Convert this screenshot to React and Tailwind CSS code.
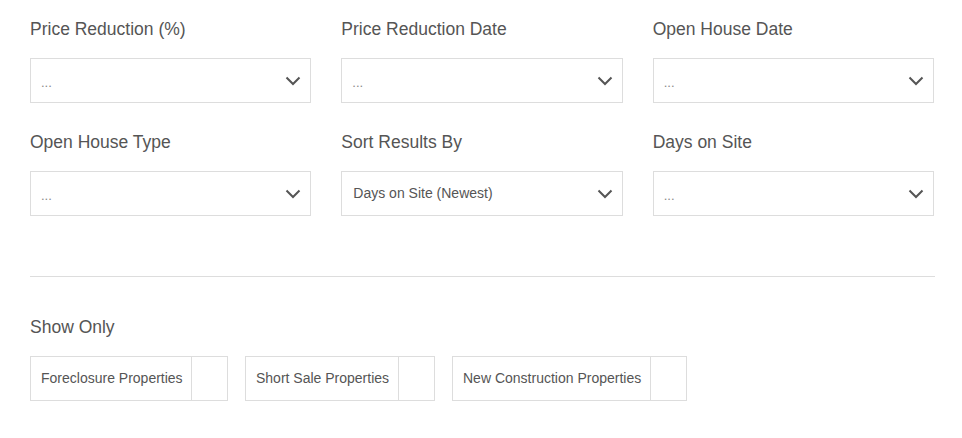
import React from 'react';

const ChevronDown = () => (
  <svg width="16" height="10" viewBox="0 0 16 10" fill="none" className="shrink-0">
    <path d="M1.5 1.5 L8 8 L14.5 1.5" stroke="#555" strokeWidth="2" />
  </svg>
);

const SelectField = ({ label, value }) => (
  <div className="flex flex-col">
    <label className="text-[17.5px] leading-[20px] text-[#555] h-[20px]">{label}</label>
    <div className="mt-[19px] h-[45px] border border-[#ddd] bg-white flex items-center justify-between pl-[10px] pr-[9px]">
      <span className={value === '...' ? 'text-[13px] text-[#888] pt-[4px]' : 'text-[14px] text-[#555] pl-[1px]'}>{value}</span>
      <ChevronDown />
    </div>
  </div>
);

const CheckOption = ({ label, width }) => (
  <div className={`h-[45px] border border-[#ddd] flex items-stretch ${width}`}>
    <span className="flex-1 flex items-center text-[14px] text-[#555] pl-[10px] whitespace-nowrap">{label}</span>
    <span className="w-[36px] border-l border-[#ddd]" />
  </div>
);

export default function App() {
  const fields = [
    { label: 'Price Reduction (%)', value: '...' },
    { label: 'Price Reduction Date', value: '...' },
    { label: 'Open House Date', value: '...' },
    { label: 'Open House Type', value: '...' },
    { label: 'Sort Results By', value: 'Days on Site (Newest)' },
    { label: 'Days on Site', value: '...' },
  ];

  return (
    <div className="w-[962px] h-[438px] bg-white px-[30px] pt-[19px] font-['Liberation_Sans',Arial,sans-serif]">
      <div className="grid grid-cols-3 gap-x-[30px] gap-y-[29px] w-[904px]">
        {fields.map(f => (
          <SelectField key={f.label} label={f.label} value={f.value} />
        ))}
      </div>

      <div className="mt-[60px] border-t border-[#ddd] w-[905px]" />

      <div className="mt-[40px] text-[17.5px] leading-[20px] text-[#555]">Show Only</div>
      <div className="mt-[19px] flex gap-[17px]">
        <CheckOption label="Foreclosure Properties" width="w-[198px]" />
        <CheckOption label="Short Sale Properties" width="w-[190px]" />
        <CheckOption label="New Construction Properties" width="w-[235px]" />
      </div>
    </div>
  );
}
